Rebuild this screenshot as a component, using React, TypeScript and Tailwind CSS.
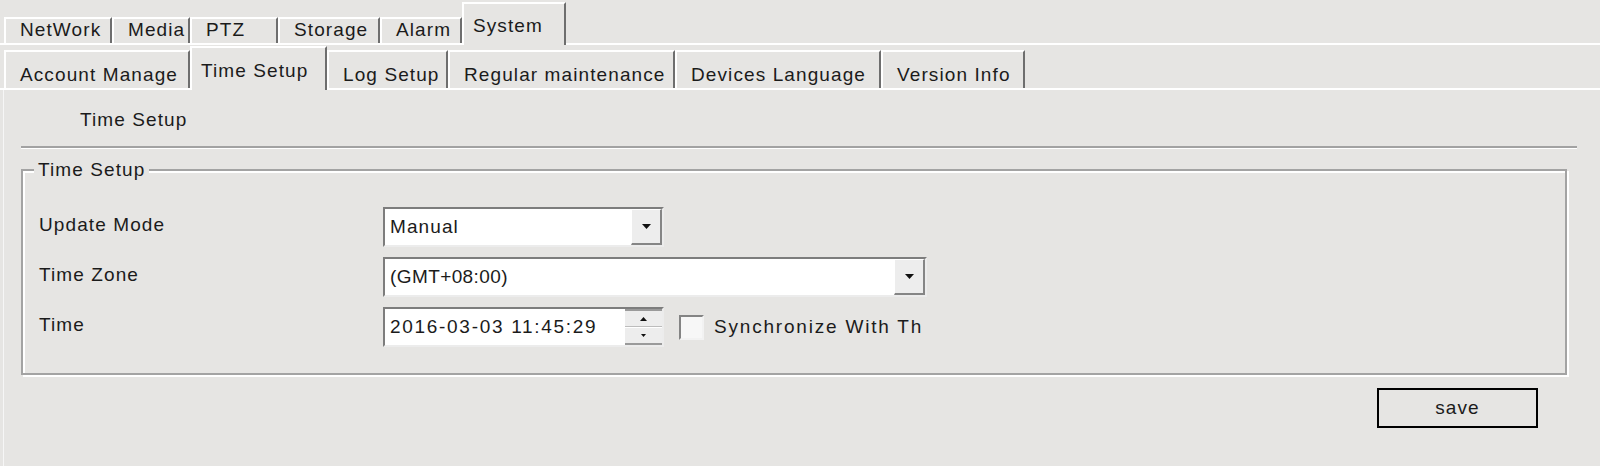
import type { ReactNode } from "react";

type TabDef = { label: string; cls: string; active?: boolean };

const topTabs: TabDef[] = [
  { label: "NetWork", cls: "w-[108px]" },
  { label: "Media", cls: "w-[78px]" },
  { label: "PTZ", cls: "w-[88px]" },
  { label: "Storage", cls: "w-[102px]" },
  { label: "Alarm", cls: "w-[82px]" },
  { label: "System", cls: "w-[104px]", active: true },
];

const subTabs: TabDef[] = [
  { label: "Account Manage", cls: "w-[186px]" },
  { label: "Time Setup", cls: "w-[137px]", active: true },
  { label: "Log Setup", cls: "w-[121px]" },
  { label: "Regular maintenance", cls: "w-[227px]" },
  { label: "Devices Language", cls: "w-[206px]" },
  { label: "Version Info", cls: "w-[144px]" },
];

// classic win32 tab: white top/left, dark right edge
function Tab({ tab, tall }: { tab: TabDef; tall: string }) {
  if (tab.active) {
    return (
      <div
        className={`${tab.cls} ${tall} -mb-[2px] relative z-10 bg-[#e6e5e3] flex items-end pl-[9px] pb-[8px] border-t-2 border-l-2 border-r-2 border-t-white border-l-white border-r-[#6e6e6e] whitespace-nowrap overflow-hidden`}
      >
        <span className="leading-[22px]">{tab.label}</span>
      </div>
    );
  }
  return (
    <div
      className={`${tab.cls} flex items-end pl-[14px] pb-[2px] border-t-2 border-l-2 border-r-2 border-t-white border-l-white border-r-[#6e6e6e] whitespace-nowrap overflow-hidden`}
    >
      <span className="leading-[22px]">{tab.label}</span>
    </div>
  );
}

function DownArrow() {
  return (
    <svg width="9" height="5" viewBox="0 0 9 5">
      <path d="M0 0h9L4.5 5z" fill="#111" />
    </svg>
  );
}

function Sunken({ className, children }: { className: string; children: ReactNode }) {
  return (
    <div
      className={`${className} flex h-[40px] bg-white border-2 border-t-[#7d7d7d] border-l-[#7d7d7d] border-r-[#ececec] border-b-[#ececec]`}
    >
      {children}
    </div>
  );
}

function Dropdown({ value, className, textCls }: { value: string; className: string; textCls?: string }) {
  return (
    <Sunken className={className}>
      <div className={`flex-1 flex items-center pl-[5px] whitespace-nowrap overflow-hidden ${textCls ?? ""}`}>{value}</div>
      <div className="w-[31px] flex items-center justify-center bg-[#ededed] border-t border-l border-t-white border-l-white border-r-2 border-b-2 border-r-[#858585] border-b-[#858585]">
        <DownArrow />
      </div>
    </Sunken>
  );
}

function Field({ label, children }: { label: string; children: ReactNode }) {
  return (
    <div className="flex items-center h-[40px]">
      <div className="w-[344px] shrink-0 -mt-[3px]">{label}</div>
      {children}
    </div>
  );
}

export default function App() {
  return (
    <div className="w-full h-[466px] overflow-hidden bg-[#e6e5e3] text-[#1b1b1b] font-['Liberation_Sans',Arial,sans-serif] text-[19px] tracking-[1.1px]">
      {/* main tabs */}
      <div className="flex items-end h-[45px] pl-[4px] border-b-2 border-white">
        {topTabs.map((t) => (
          <Tab key={t.label} tab={t} tall="h-[43px]" />
        ))}
      </div>
      <div className="flex items-end h-[45px] pl-[4px] border-b-2 border-white [&>div:not(.z-10)]:h-[38px]">
        {subTabs.map((t) => (
          <Tab key={t.label} tab={t} tall="h-[44px]" />
        ))}
      </div>

      <div className="ml-[3px] border-l border-[#f6f6f6] h-full">
        <div className="h-[56px] flex items-center pl-[76px] pt-[4px]">Time Setup</div>
        <div className="ml-[17px] mr-[23px] border-t-2 border-[#a2a2a2] border-b border-b-white" />

        <fieldset className="mt-[10px] ml-[17px] mr-[33px] border-2 border-[#a3a3a3] shadow-[2px_2px_0_#fff,inset_2px_2px_0_#fff] pt-[26px] pb-[26px]">
          <legend className="ml-[11px] px-[4px] bg-[#e6e5e3] leading-[22px]">Time Setup</legend>
          <div className="flex flex-col gap-[10px] pl-[16px]">
            <Field label="Update Mode">
              <Dropdown value="Manual" className="w-[281px]" />
            </Field>
            <Field label="Time Zone">
              <Dropdown value="(GMT+08:00)" className="w-[544px]" textCls="tracking-[0.4px]" />
            </Field>
            <Field label="Time">
              <Sunken className="w-[281px]">
                <div className="flex-1 flex items-center pl-[5px] whitespace-nowrap tracking-[1.7px]">2016-03-03 11:45:29</div>
                <div className="w-[37px] flex flex-col bg-[#ededed]">
                  <div className="flex-1 flex items-center justify-center border-t-2 border-[#9a9a9a] border-b border-b-[#bcbcbc]">
                    <svg width="7" height="4" viewBox="0 0 7 4">
                      <path d="M0 4h7L3.5 0z" fill="#111" />
                    </svg>
                  </div>
                  <div className="flex-1 flex items-center justify-center border-t border-white border-b-2 border-b-[#9a9a9a]">
                    <svg width="5" height="3" viewBox="0 0 5 3">
                      <path d="M0 0h5L2.5 3z" fill="#111" />
                    </svg>
                  </div>
                </div>
              </Sunken>
              <div className="ml-[15px] w-[25px] h-[25px] bg-[#f7f7f7] border-2 border-t-[#848484] border-l-[#848484] border-r-[#f2f2f2] border-b-[#f2f2f2]" />
              <div className="ml-[10px] w-[207px] overflow-hidden whitespace-nowrap tracking-[1.8px]">Synchronize With The PC</div>
            </Field>
          </div>
        </fieldset>

        <div className="flex justify-end mr-[62px] mt-[13px]">
          <button className="w-[161px] h-[40px] border-2 border-black bg-[#e6e5e3] tracking-[1.1px]">save</button>
        </div>
      </div>
    </div>
  );
}
